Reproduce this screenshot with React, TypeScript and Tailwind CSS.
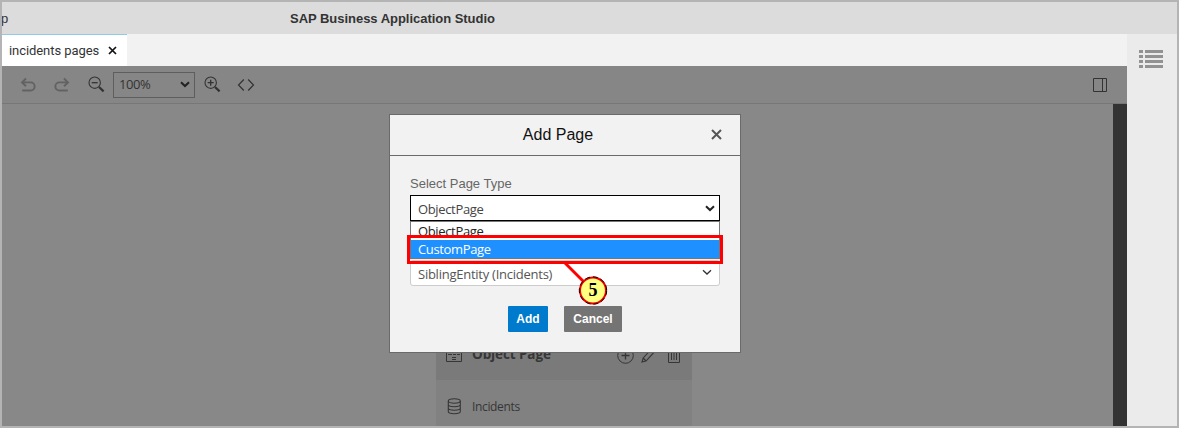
import React from 'react';

const segoe = "font-['Open_Sans','Noto_Sans',sans-serif]";
const arial = "font-['Liberation_Sans',Arial,sans-serif]";

function UndoIcon({ flip = false }: { flip?: boolean }) {
  return (
    <svg width="16" height="16" viewBox="0 0 16 16" fill="none" stroke="#626262" strokeWidth="1.9" className={flip ? '-scale-x-100' : ''}>
      <path d="M6 1.5 2 5.4 6 9.300M2 5.4h8.6a3.9 3.9 0 0 1 0 8.100H2.2" />
    </svg>
  );
}

function ZoomIcon({ plus = false }: { plus?: boolean }) {
  return (
    <svg width="17" height="17" viewBox="0 0 17 17" fill="none" stroke="#333" strokeWidth="1.1">
      <circle cx="6.7" cy="6.7" r="5.7" />
      <path d={plus ? 'M3.7 6.7h6M6.7 3.7v6' : 'M3.7 6.7h6'} strokeWidth="1.3" />
      <path d="m11 11 4.6 4.4" strokeWidth="2.2" />
    </svg>
  );
}

function Chevron({ bold = false }: { bold?: boolean }) {
  return (
    <svg width="10" height="7" viewBox="0 0 10 7" fill="none" stroke={bold ? '#222' : '#333'} strokeWidth={bold ? 2 : 1.3}>
      <path d="M1 1.2 5 5l4-3.8" />
    </svg>
  );
}

function Toolbar() {
  return (
    <div className="flex h-[38px] shrink-0 items-center border-b border-[#777] bg-[#868686] pl-[18px] pr-5">
      <UndoIcon />
      <div className="ml-[18px] flex"><UndoIcon flip /></div>
      <div className="ml-[18px] flex"><ZoomIcon /></div>
      <div className={`ml-2 flex h-[26px] w-[82px] items-center justify-between border border-[#5e5e5e] pl-[5px] pr-1 text-[13px] text-[#333] ${segoe}`}>
        <span className="tracking-[-0.4px]">100%</span>
        <Chevron bold />
      </div>
      <div className="ml-[9px] flex"><ZoomIcon plus /></div>
      <svg className="ml-4" width="18" height="14" viewBox="0 0 18 14" fill="none" stroke="#333" strokeWidth="1.2">
        <path d="M6.8 1.5 1.5 7l5.3 5.5M11.2 1.5 16.5 7l-5.3 5.5" />
      </svg>
      <svg className="ml-auto" width="14" height="14" viewBox="0 0 14 14" fill="none" stroke="#333">
        <path d="M.5.5h13v13H.5zM9.5.5v13" />
      </svg>
    </div>
  );
}

function PageCard() {
  return (
    <div className={`absolute bottom-0 left-[434px] flex h-[96px] w-[256px] flex-col bg-[#818181] text-[#363636] ${segoe}`}>
      <div className="flex h-[50px] shrink-0 items-center bg-[#7a7a7a] pl-[10px] pr-[11px]">
        <svg width="16" height="14" viewBox="0 0 16 14" fill="none" stroke="#363636">
          <path d="M.5.5h15v13H.5z" />
          <path d="M2 6.5h4M7 6.5h3M11 6.5h3M6 9.5h4M6 11.5h4" />
        </svg>
        <span className="-mt-px ml-[10px] text-[13.5px] font-bold tracking-[-0.1px]">Object Page</span>
        <svg className="ml-auto" width="17" height="17" viewBox="0 0 17 17" fill="none" stroke="#363636">
          <circle cx="8.5" cy="8.5" r="7.8" />
          <path d="M4.500 8.500h8M8.500 4.500v8" strokeWidth="1.3" />
        </svg>
        <svg className="ml-[7px]" width="15" height="16" viewBox="0 0 15 16" fill="none" stroke="#363636" strokeWidth="1.1">
          <path d="m1 15 1.2-4L11 1.5l3 2.700-9 9.800zM2.200 11l2.800 3" />
        </svg>
        <svg className="ml-[11px]" width="14" height="16" viewBox="0 0 14 16" fill="none" stroke="#363636">
          <path d="M1.500 3.500v12h11v-12M0 3.500h14M5 1.500h4M4.500 6v7M7 6v7M9.500 6v7" />
        </svg>
      </div>
      <div className="flex h-[46px] items-center pl-[11px] pt-[7px]">
        <svg width="15" height="17" viewBox="0 0 15 17" fill="none" stroke="#363636" strokeWidth="1.1">
          <ellipse cx="7.300" cy="3" rx="6" ry="2.200" />
          <path d="M1.300 3v10.500c0 3 12 3 12 0V3M1.300 6.500c0 3 12 3 12 0M1.300 10c0 3 12 3 12 0" />
        </svg>
        <span className="ml-[10px] text-[12px] tracking-[-0.35px]">Incidents</span>
      </div>
    </div>
  );
}

function Dialog() {
  return (
    <div className={`absolute left-[387px] top-[10px] h-[239px] w-[352px] border border-[#6a6a6a] bg-[#f2f2f2] ${arial}`}>
      <div className="relative flex h-[41px] items-center justify-center border-b border-[#6a6a6a] text-[16px] text-[#111]">
        <span className="-ml-[14px]">Add Page</span>
        <svg className="absolute right-[18px] top-[14px]" width="11" height="11" viewBox="0 0 11 11" stroke="#555" strokeWidth="2">
          <path d="m1 1 9 9M10 1l-9 9" />
        </svg>
      </div>
      <div className="px-5 pt-5">
        <div className="h-5 text-[13px] leading-[16px] text-[#666]">Select Page Type</div>
        <div className={`relative -mt-px ${segoe}`}>
          <div className="flex h-[26px] items-center justify-between border border-black bg-white pl-[7px] pr-[4px] pt-[3px] text-[13px] text-[#444]">
            <span className="tracking-[-0.35px]">ObjectPage</span>
            <div className="-mt-[3px]"><Chevron bold /></div>
          </div>
          <div className="absolute left-0 top-[26px] w-full border border-[#777] bg-white text-[13px] leading-[18px] tracking-[-0.35px]">
            <div className="h-[18px] pl-[7px] text-[#222]">ObjectPage</div>
            <div className="h-[18px] bg-[#1e90ff] pl-[7px] text-white">CustomPage</div>
          </div>
        </div>
        <div className={`mt-[39px] flex h-[26px] items-center justify-between rounded-[3px] border border-[#ccc] bg-white pl-[7px] pr-[7px] pt-[3px] text-[13px] text-[#555] ${segoe}`}>
          <span className="tracking-[-0.25px]">SiblingEntity (Incidents)</span>
          <div className="-mt-1"><Chevron /></div>
        </div>
      </div>
      <div className="mt-5 flex gap-4 pl-[118px] text-[12px] font-bold text-white">
        <div className="flex h-[26px] w-10 items-center justify-center rounded-[1px] bg-[#007acc]">Add</div>
        <div className="flex h-[26px] w-[58px] items-center justify-center rounded-[1px] bg-[#747474]">Cancel</div>
      </div>
    </div>
  );
}

function Callout() {
  return (
    <>
      <div className="absolute left-[405px] top-[131px] h-[29px] w-[316px] border-3 border-[#f00]">
        <div className="h-[2px] bg-white ml-[2px] mr-[1px]" />
      </div>
      <svg className="absolute left-[558px] top-[157px]" width="52" height="48" viewBox="0 0 52 48">
        <path d="m5 2 20 20" stroke="#f00" strokeWidth="3" />
        <circle cx="33" cy="29.5" r="13" fill="#ffff80" stroke="#e00" strokeWidth="2" />
        <circle cx="33" cy="29.5" r="13.7" fill="none" stroke="#000" strokeWidth="0.9" strokeDasharray="5 3" />
        <text x="33" y="35" textAnchor="middle" fontFamily="Liberation Serif, serif" fontWeight="bold" fontSize="18">5</text>
      </svg>
    </>
  );
}

export default function App() {
  return (
    <div className={`flex h-[428px] w-[1179px] flex-col overflow-hidden border-2 border-[#b4b4b4] bg-[#ebebeb] ${arial}`}>
      <header className="flex h-8 shrink-0 items-center bg-[#dcdcdc] pt-[2px] text-[13px] text-[#333]">
        <span className="w-[288px] -ml-px mr-px">p</span>
        <span className="font-bold tracking-[-0.03px]">SAP Business Application Studio</span>
      </header>
      <div className="flex min-h-0 flex-1">
        <main className="flex w-[1125px] flex-col">
          <div className="flex h-8 shrink-0 bg-[#f2f2f2]">
            <div className="flex w-[125px] items-center border-t border-[#91c9ea] bg-white pl-[7px] font-['Roboto',sans-serif] text-[13px] text-[#333]">
              <span className="w-[99px] tracking-[-0.07px]">incidents pages</span>
              <svg width="9" height="9" viewBox="0 0 9 9" stroke="#111" strokeWidth="1.7">
                <path d="m1 1 7 7M8 1 1 8" />
              </svg>
            </div>
          </div>
          <Toolbar />
          <div className="relative flex min-h-0 flex-1 bg-[#888]">
            <PageCard />
            <Dialog />
            <Callout />
            <div className="ml-auto w-[14px] bg-[#333]" />
          </div>
        </main>
        <aside className="w-[50px] bg-[#ebebeb] pl-[12px] pt-4">
          <svg width="24" height="18" viewBox="0 0 24 18" fill="#929292">
            <path d="M0 0h4v3H0zM6 0h18v3H6zM0 5h4v3H0zM6 5h18v3H6zM0 10h4v3H0zM6 10h18v3H6zM0 15h4v3H0zM6 15h18v3H6z" />
          </svg>
        </aside>
      </div>
    </div>
  );
}
